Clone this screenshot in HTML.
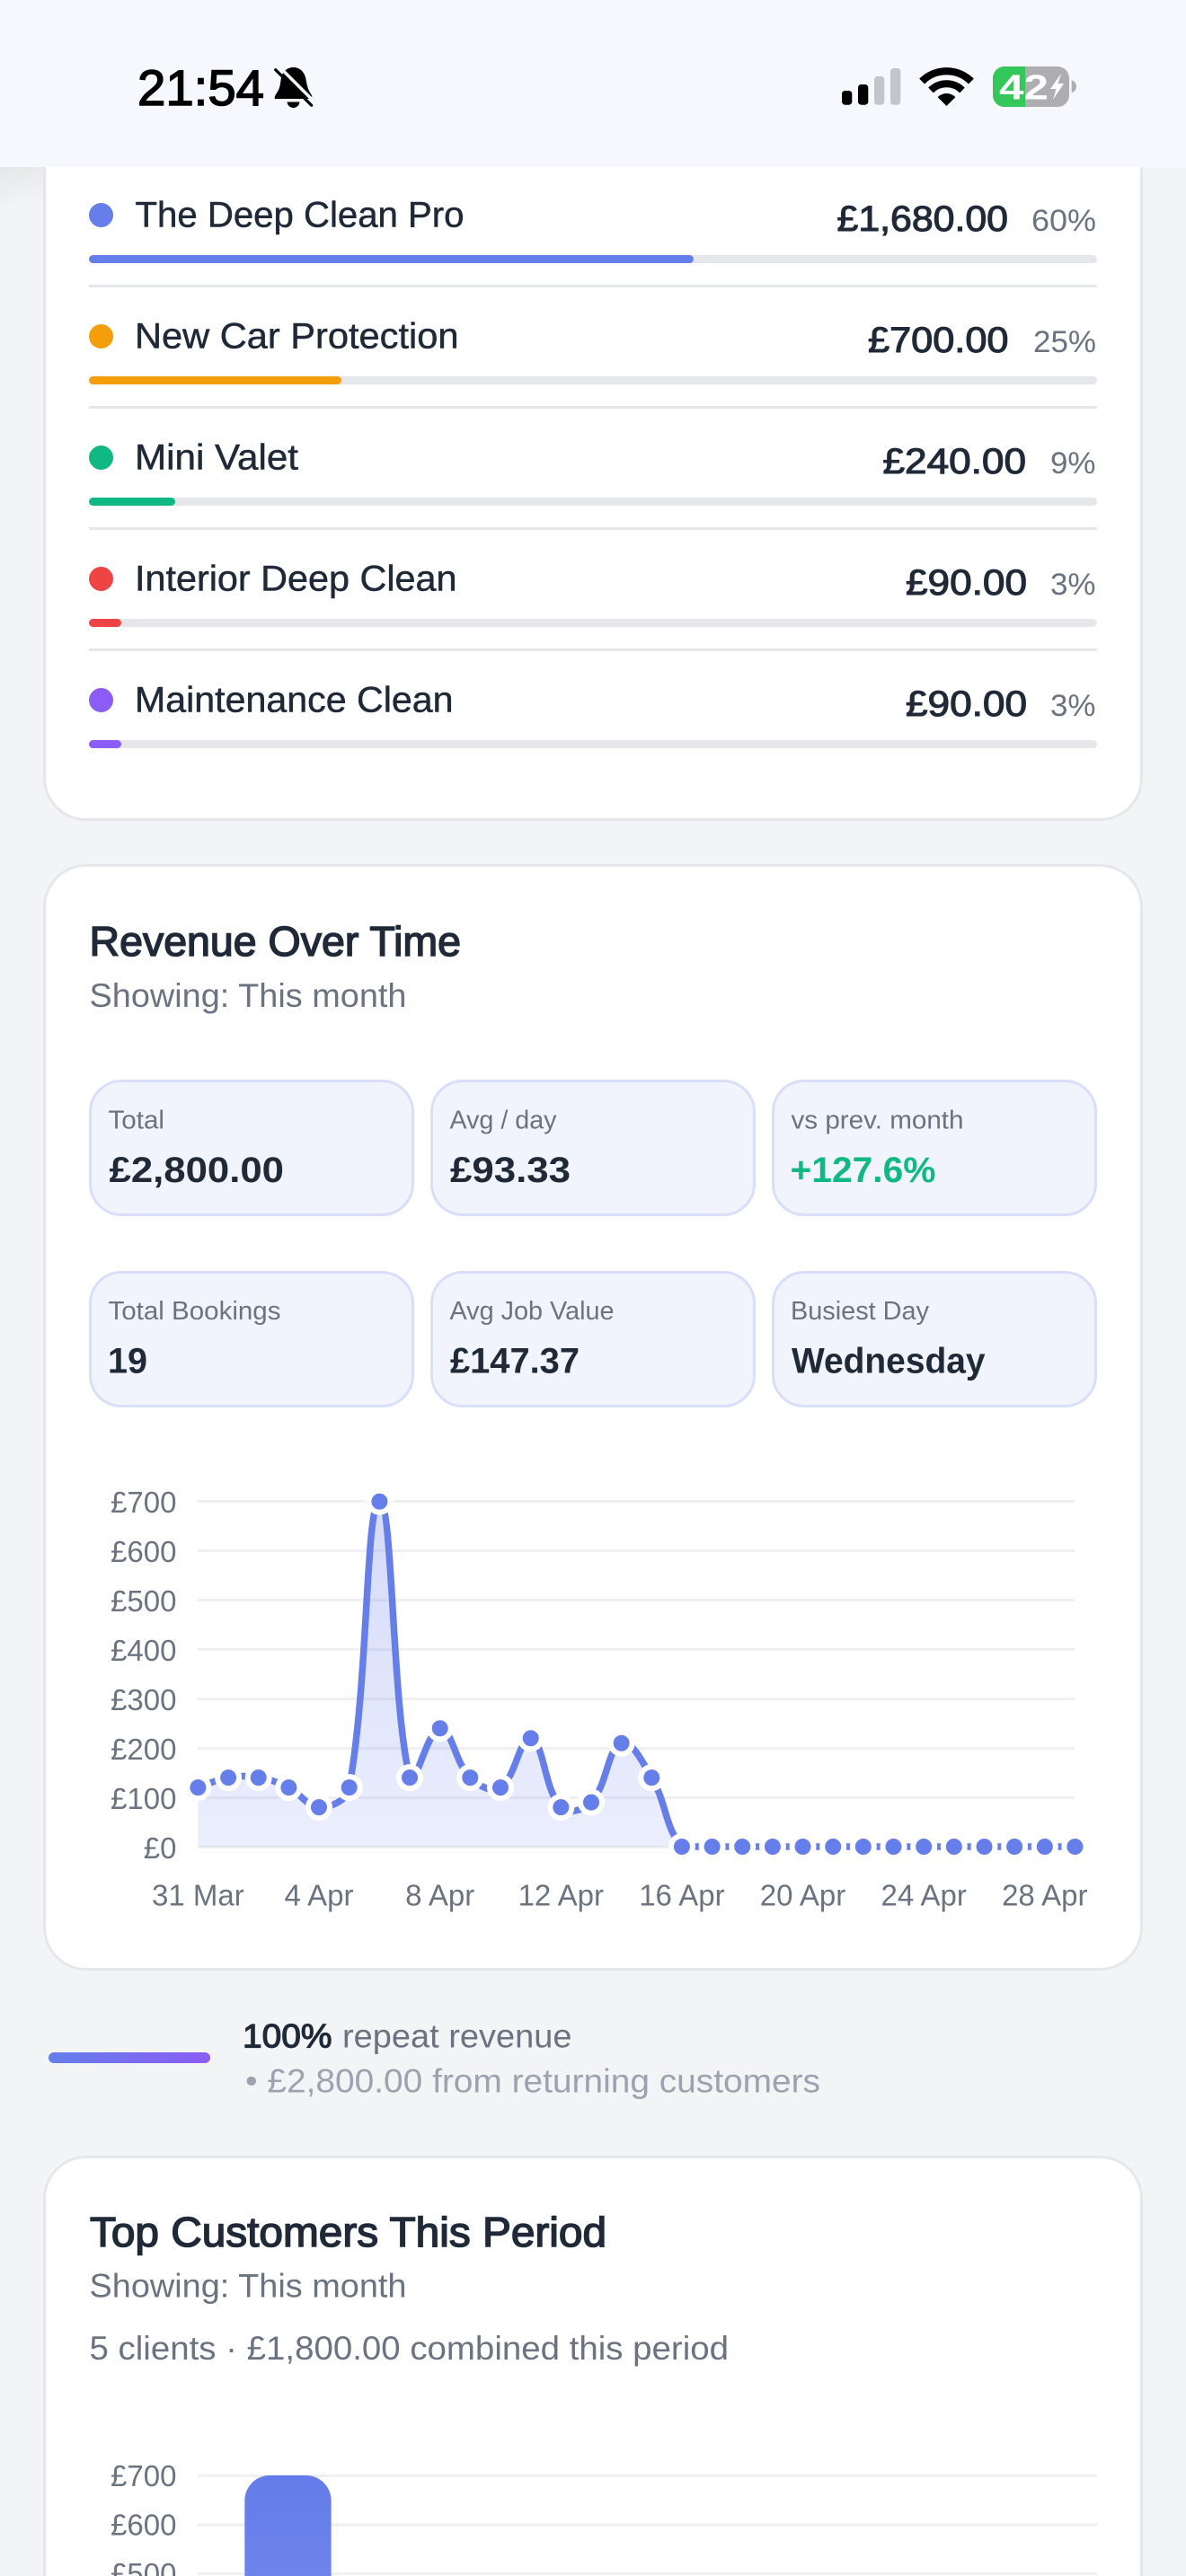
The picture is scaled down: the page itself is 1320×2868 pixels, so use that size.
<!DOCTYPE html>
<html lang="en">
<head>
<meta charset="utf-8">
<title>Analytics</title>
<style>
html,body{margin:0;padding:0;width:1320px;height:2868px;overflow:hidden;background:#f3f4f6}
svg{display:block}
text{font-family:"Liberation Sans",Arial,sans-serif}
.n{font-size:40px;fill:#1f2937;stroke:#1f2937;stroke-width:.5px}
.a{font-size:40px;fill:#1f2937;stroke:#1f2937;stroke-width:1.1px}
.p{font-size:34px;fill:#6b7280}
.t{font-size:46px;fill:#1f2937;stroke:#1f2937;stroke-width:1.5px}
.s{font-size:37px;fill:#6b7280}
.l{font-size:29px;fill:#6b7280}
.v{font-size:40px;font-weight:700;fill:#1f2937}
.c{font-size:33px;fill:#6b7280}
.box{fill:#f1f4fd;stroke:#d9dffa;stroke-width:3}
.card{fill:#fff;stroke:#e5e7eb;stroke-width:3}
</style>
</head>
<body>
<svg width="1320" height="2868" viewBox="0 0 1320 2868" xmlns="http://www.w3.org/2000/svg">
<defs>
<linearGradient id="sh" x1=".1" y1="0" x2=".35" y2="1"><stop offset="0" stop-color="#e6e7e9"/><stop offset=".9" stop-color="#f3f4f6"/></linearGradient>
<linearGradient id="area" gradientUnits="userSpaceOnUse" x1="0" y1="1671" x2="0" y2="2056"><stop offset="0" stop-color="#667eea" stop-opacity=".28"/><stop offset="1" stop-color="#667eea" stop-opacity=".13"/></linearGradient>
<linearGradient id="rep" x1="0" y1="0" x2="1" y2="0"><stop offset="0" stop-color="#667eea"/><stop offset="1" stop-color="#8b5cf6"/></linearGradient>
<linearGradient id="bar" x1="0" y1="0" x2="0" y2="1"><stop offset="0" stop-color="#647ce9"/><stop offset="1" stop-color="#6d84eb"/></linearGradient>
</defs>

<rect width="1320" height="2868" fill="#f3f4f6"/>
<rect x="0" y="186" width="48" height="52" fill="url(#sh)"/>

<!-- Card 1 -->
<path class="card" d="M49.5 0V866A46.5 46.5 0 0 0 96 912.5H1224A46.5 46.5 0 0 0 1270.5 866V0Z"/>
<circle cx="112.5" cy="239.5" r="13.5" fill="#667eea"/>
<text class="n" x="150.5" y="252.5" textLength="366" lengthAdjust="spacingAndGlyphs">The Deep Clean Pro</text>
<text class="a" x="931.5" y="257" textLength="190.5" lengthAdjust="spacingAndGlyphs">£1,680.00</text>
<text class="p" x="1148" y="257" textLength="72" lengthAdjust="spacingAndGlyphs">60%</text>
<rect x="99" y="284" width="1122" height="9" rx="4.5" fill="#e5e7eb"/>
<rect x="99" y="284" width="673" height="9" rx="4.5" fill="#667eea"/>
<rect x="99" y="317" width="1122" height="3" fill="#e5e7eb"/>

<circle cx="112.5" cy="374.5" r="13.5" fill="#f59e0b"/>
<text class="n" x="150" y="387.5" textLength="360.5" lengthAdjust="spacingAndGlyphs">New Car Protection</text>
<text class="a" x="966" y="392" textLength="156.5" lengthAdjust="spacingAndGlyphs">£700.00</text>
<text class="p" x="1150" y="392" textLength="70" lengthAdjust="spacingAndGlyphs">25%</text>
<rect x="99" y="419" width="1122" height="9" rx="4.5" fill="#e5e7eb"/>
<rect x="99" y="419" width="281" height="9" rx="4.5" fill="#f59e0b"/>
<rect x="99" y="452" width="1122" height="3" fill="#e5e7eb"/>

<circle cx="112.5" cy="509.5" r="13.5" fill="#10b981"/>
<text class="n" x="150" y="522.5" textLength="182" lengthAdjust="spacingAndGlyphs">Mini Valet</text>
<text class="a" x="982.5" y="527" textLength="159.5" lengthAdjust="spacingAndGlyphs">£240.00</text>
<text class="p" x="1169" y="527" textLength="50.5" lengthAdjust="spacingAndGlyphs">9%</text>
<rect x="99" y="554" width="1122" height="9" rx="4.5" fill="#e5e7eb"/>
<rect x="99" y="554" width="96" height="9" rx="4.5" fill="#10b981"/>
<rect x="99" y="587" width="1122" height="3" fill="#e5e7eb"/>

<circle cx="112.5" cy="644.5" r="13.5" fill="#ef4444"/>
<text class="n" x="150" y="657.5" textLength="358.5" lengthAdjust="spacingAndGlyphs">Interior Deep Clean</text>
<text class="a" x="1008" y="662" textLength="135" lengthAdjust="spacingAndGlyphs">£90.00</text>
<text class="p" x="1169" y="662" textLength="50.5" lengthAdjust="spacingAndGlyphs">3%</text>
<rect x="99" y="689" width="1122" height="9" rx="4.5" fill="#e5e7eb"/>
<rect x="99" y="689" width="36" height="9" rx="4.5" fill="#ef4444"/>
<rect x="99" y="722" width="1122" height="3" fill="#e5e7eb"/>

<circle cx="112.5" cy="779.5" r="13.5" fill="#8b5cf6"/>
<text class="n" x="150" y="792.5" textLength="354.5" lengthAdjust="spacingAndGlyphs">Maintenance Clean</text>
<text class="a" x="1008" y="797" textLength="135" lengthAdjust="spacingAndGlyphs">£90.00</text>
<text class="p" x="1169" y="797" textLength="50.5" lengthAdjust="spacingAndGlyphs">3%</text>
<rect x="99" y="824" width="1122" height="9" rx="4.5" fill="#e5e7eb"/>
<rect x="99" y="824" width="36" height="9" rx="4.5" fill="#8b5cf6"/>

<!-- Card 2 -->
<rect class="card" x="49.5" y="963.5" width="1221" height="1229" rx="46.5"/>
<text class="t" x="99.5" y="1064" textLength="413.5" lengthAdjust="spacingAndGlyphs">Revenue Over Time</text>
<text class="s" x="99.5" y="1121" textLength="353" lengthAdjust="spacingAndGlyphs">Showing: This month</text>

<rect class="box" x="100.5" y="1203.5" width="359" height="149" rx="34.5"/>
<rect class="box" x="480.5" y="1203.5" width="359" height="149" rx="34.5"/>
<rect class="box" x="860.5" y="1203.5" width="359" height="149" rx="34.5"/>
<rect class="box" x="100.5" y="1416.5" width="359" height="149" rx="34.5"/>
<rect class="box" x="480.5" y="1416.5" width="359" height="149" rx="34.5"/>
<rect class="box" x="860.5" y="1416.5" width="359" height="149" rx="34.5"/>

<text class="l" x="120.5" y="1256.5" textLength="62.5" lengthAdjust="spacingAndGlyphs">Total</text>
<text class="v" x="121.5" y="1316" textLength="194.5" lengthAdjust="spacingAndGlyphs">£2,800.00</text>
<text class="l" x="500.5" y="1256.5" textLength="119" lengthAdjust="spacingAndGlyphs">Avg / day</text>
<text class="v" x="501" y="1316" textLength="134" lengthAdjust="spacingAndGlyphs">£93.33</text>
<text class="l" x="880.5" y="1256.5" textLength="192" lengthAdjust="spacingAndGlyphs">vs prev. month</text>
<text class="v" x="879.5" y="1316" textLength="162" lengthAdjust="spacingAndGlyphs" style="fill:#10b981">+127.6%</text>
<text class="l" x="120.5" y="1469" textLength="192" lengthAdjust="spacingAndGlyphs">Total Bookings</text>
<text class="v" x="120" y="1528.5" textLength="44" lengthAdjust="spacingAndGlyphs">19</text>
<text class="l" x="500.5" y="1469" textLength="183" lengthAdjust="spacingAndGlyphs">Avg Job Value</text>
<text class="v" x="501" y="1528.5" textLength="144" lengthAdjust="spacingAndGlyphs">£147.37</text>
<text class="l" x="880" y="1469" textLength="154" lengthAdjust="spacingAndGlyphs">Busiest Day</text>
<text class="v" x="881" y="1528.5" textLength="215.5" lengthAdjust="spacingAndGlyphs">Wednesday</text>

<!-- Chart grid -->
<g fill="#f0f0f2">
<rect x="220" y="1670" width="976" height="3"/>
<rect x="220" y="1725" width="976" height="3"/>
<rect x="220" y="1780" width="976" height="3"/>
<rect x="220" y="1835" width="976" height="3"/>
<rect x="220" y="1890" width="976" height="3"/>
<rect x="220" y="1945" width="976" height="3"/>
<rect x="220" y="2000" width="976" height="3"/>
<rect x="220" y="2055" width="976" height="3"/>
</g>
<g text-anchor="end">
<text class="c" x="196.5" y="1684">£700</text>
<text class="c" x="196.5" y="1739">£600</text>
<text class="c" x="196.5" y="1794">£500</text>
<text class="c" x="196.5" y="1849">£400</text>
<text class="c" x="196.5" y="1904">£300</text>
<text class="c" x="196.5" y="1959">£200</text>
<text class="c" x="196.5" y="2014">£100</text>
<text class="c" x="196.5" y="2069">£0</text>
</g>
<g text-anchor="middle">
<text class="c" x="220.4" y="2121.5">31 Mar</text>
<text class="c" x="355" y="2121.5">4 Apr</text>
<text class="c" x="489.7" y="2121.5">8 Apr</text>
<text class="c" x="624.3" y="2121.5">12 Apr</text>
<text class="c" x="758.9" y="2121.5">16 Apr</text>
<text class="c" x="893.5" y="2121.5">20 Apr</text>
<text class="c" x="1028.2" y="2121.5">24 Apr</text>
<text class="c" x="1162.8" y="2121.5">28 Apr</text>
</g>
<path fill="url(#area)" d="M220.4 1990.1C233.9 1985.7 240.3 1981.4 254.1 1979.1C267.2 1977 274.6 1977 287.7 1979.1C301.5 1981.4 308.8 1983.9 321.4 1990.1C335.7 1997.1 341.5 2012.1 355 2012.1C368.5 2012.1 385.7 2005.3 388.7 1990.1C410.6 1869.1 406.7 1673.9 422.4 1671.7C437.6 1671.7 435.7 1895.5 456 1979.1C460.6 1996.5 476.2 1924.2 489.7 1924.2C503.2 1924.2 505.9 1962.1 523.3 1979.1C532.9 1988.5 547.4 1996.3 557 1990.1C574.4 1978.8 579 1931.4 590.7 1935.2C605.9 1940.2 605.2 1991.8 624.3 2012.1C632.1 2020.4 649.5 2015.6 658 2006.6C676.4 1987 675.6 1947.2 691.6 1940.7C702.6 1936.2 715.1 1961.7 725.3 1979.1C742.1 2007.8 739.7 2034.1 758.9 2056L220.4 2056Z"/>
<path fill="none" stroke="#667eea" stroke-width="7.5" d="M220.4 1990.1C233.9 1985.7 240.3 1981.4 254.1 1979.1C267.2 1977 274.6 1977 287.7 1979.1C301.5 1981.4 308.8 1983.9 321.4 1990.1C335.7 1997.1 341.5 2012.1 355 2012.1C368.5 2012.1 385.7 2005.3 388.7 1990.1C410.6 1869.1 406.7 1673.9 422.4 1671.7C437.6 1671.7 435.7 1895.5 456 1979.1C460.6 1996.5 476.2 1924.2 489.7 1924.2C503.2 1924.2 505.9 1962.1 523.3 1979.1C532.9 1988.5 547.4 1996.3 557 1990.1C574.4 1978.8 579 1931.4 590.7 1935.2C605.9 1940.2 605.2 1991.8 624.3 2012.1C632.1 2020.4 649.5 2015.6 658 2006.6C676.4 1987 675.6 1947.2 691.6 1940.7C702.6 1936.2 715.1 1961.7 725.3 1979.1C742.1 2007.8 739.7 2034.1 758.9 2056L1196.4 2056"/>
<g fill="#667eea" stroke="#fff" stroke-width="6">
<circle cx="220.4" cy="1990.1" r="12"/><circle cx="254.1" cy="1979.1" r="12"/><circle cx="287.7" cy="1979.1" r="12"/><circle cx="321.4" cy="1990.1" r="12"/><circle cx="355" cy="2012.1" r="12"/><circle cx="388.7" cy="1990.1" r="12"/><circle cx="422.4" cy="1671.7" r="12"/><circle cx="456" cy="1979.1" r="12"/><circle cx="489.7" cy="1924.2" r="12"/><circle cx="523.3" cy="1979.1" r="12"/><circle cx="557" cy="1990.1" r="12"/><circle cx="590.7" cy="1935.2" r="12"/><circle cx="624.3" cy="2012.1" r="12"/><circle cx="658" cy="2006.6" r="12"/><circle cx="691.6" cy="1940.7" r="12"/><circle cx="725.3" cy="1979.1" r="12"/><circle cx="758.9" cy="2056" r="12"/><circle cx="792.6" cy="2056" r="12"/><circle cx="826.2" cy="2056" r="12"/><circle cx="859.9" cy="2056" r="12"/><circle cx="893.5" cy="2056" r="12"/><circle cx="927.2" cy="2056" r="12"/><circle cx="960.8" cy="2056" r="12"/><circle cx="994.5" cy="2056" r="12"/><circle cx="1028.2" cy="2056" r="12"/><circle cx="1061.8" cy="2056" r="12"/><circle cx="1095.5" cy="2056" r="12"/><circle cx="1129.1" cy="2056" r="12"/><circle cx="1162.8" cy="2056" r="12"/><circle cx="1196.4" cy="2056" r="12"/>
</g>

<!-- Repeat revenue -->
<rect x="54" y="2285" width="180" height="12" rx="6" fill="url(#rep)"/>
<text x="270" y="2279.5" font-size="37" fill="#1f2937" stroke="#1f2937" stroke-width="1.2" textLength="99.5" lengthAdjust="spacingAndGlyphs">100%</text>
<text x="381" y="2279.5" font-size="37" fill="#6b7280" textLength="255.5" lengthAdjust="spacingAndGlyphs">repeat revenue</text>
<text x="273" y="2329.5" font-size="37" fill="#9ca3af" textLength="640" lengthAdjust="spacingAndGlyphs">• £2,800.00 from returning customers</text>

<!-- Card 3 -->
<path class="card" d="M49.5 2868V2448A46.5 46.5 0 0 1 96 2401.5H1224A46.5 46.5 0 0 1 1270.5 2448V2868"/>
<text class="t" x="100" y="2501" textLength="575" lengthAdjust="spacingAndGlyphs">Top Customers This Period</text>
<text class="s" x="99.5" y="2557.5" textLength="353" lengthAdjust="spacingAndGlyphs">Showing: This month</text>
<text class="s" x="99.5" y="2627" textLength="711.5" lengthAdjust="spacingAndGlyphs">5 clients · £1,800.00 combined this period</text>
<g fill="#f0f0f2">
<rect x="220" y="2755" width="1001" height="3"/>
<rect x="220" y="2809.5" width="1001" height="3"/>
<rect x="220" y="2864" width="1001" height="3"/>
</g>
<text class="c" x="196.5" y="2768" text-anchor="end">£700</text>
<text class="c" x="196.5" y="2822.5" text-anchor="end">£600</text>
<text class="c" x="196.5" y="2877" text-anchor="end">£500</text>
<path fill="url(#bar)" d="M272.3 2868V2784a28 28 0 0 1 28-28h40.3a28 28 0 0 1 28 28V2868Z"/>

<!-- Status bar -->
<rect x="0" y="0" width="1320" height="186" fill="#f7f8fe"/>
<text x="153" y="117" font-size="56" fill="#000" stroke="#000" stroke-width="1.5" textLength="141" lengthAdjust="spacingAndGlyphs">21:54</text>
<path fill="#000" d="M326.5 75C333 75 338 79 340 86C341.5 93 342 98 345 103C347 106 348 108 347 110L306 110C305 108 307 105 309 102C312 97 312 92 313 86C315 79 320 75 326.5 75Z"/>
<path fill="#000" d="M319.5 113.5H333.5C333 117.5 330 120 326.5 120C323 120 320 117.5 319.5 113.5Z"/>
<path d="M309.5 73L352 115.5" stroke="#f7f8fe" stroke-width="3.5" fill="none"/>
<path d="M306.7 77.7L346.7 117.3" stroke="#000" stroke-width="3.2" stroke-linecap="round" fill="none"/>
<rect x="937" y="101" width="11.3" height="15.7" rx="3.5" fill="#000"/>
<rect x="955" y="94" width="11.3" height="22.7" rx="3.5" fill="#000"/>
<rect x="973" y="85" width="11.3" height="31.7" rx="3.5" fill="#c4c5ca"/>
<rect x="991" y="76" width="11.3" height="40.7" rx="3.5" fill="#c4c5ca"/>
<path d="M1026.1 90.6A38.8 38.8 0 0 1 1080.9 90.6" fill="none" stroke="#000" stroke-width="8.3"/>
<path d="M1036 100.5A24.7 24.7 0 0 1 1071 100.5" fill="none" stroke="#000" stroke-width="8"/>
<path d="M1053.5 118L1043.6 108.1A14 14 0 0 1 1063.4 108.1Z" fill="#000"/>
<rect x="1105" y="74" width="85" height="45" rx="13" fill="#aeaeb2"/>
<path d="M1118 74H1141V119H1118A13 13 0 0 1 1105 106V87A13 13 0 0 1 1118 74Z" fill="#34c759"/>
<path d="M1192.7 89.3C1196 90.5 1198 93 1198 96.3C1198 99.6 1196 102.1 1192.7 103.3Z" fill="#aeaeb2"/>
<text x="1112" y="110.5" font-size="39" font-weight="700" fill="#fff" textLength="55" lengthAdjust="spacingAndGlyphs">42</text>
<path d="M1181 82L1169 99H1175.5L1172 111L1184 93H1177.5Z" fill="#fff"/>
</svg>
</body>
</html>
